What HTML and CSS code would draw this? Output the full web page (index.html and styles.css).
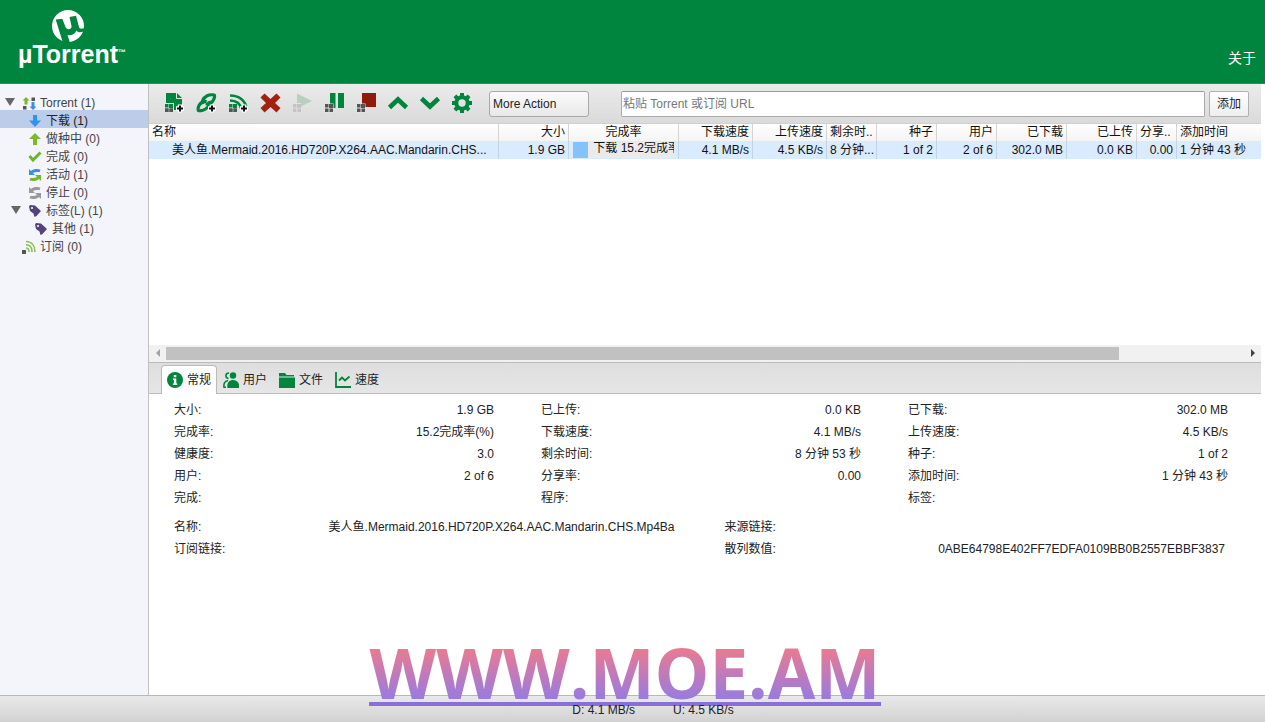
FILE: index.html
```html
<!DOCTYPE html>
<html lang="zh-CN">
<head>
<meta charset="utf-8">
<title>µTorrent</title>
<link rel="stylesheet" href="styles.css">
</head>
<body>
<svg class="defs" width="0" height="0" aria-hidden="true">
  <symbol id="dots" viewBox="0 0 24 24">
    <path d="M7 13h4v4H7zM3 17.500h3.500V21H3zM7.500 17.500H11V21H7.500zM3 13h3.500v3.500H3z"/>
  </symbol>
  <symbol id="plus" viewBox="0 0 24 24">
    <path d="M18 13.500v8M14 17.500h8" stroke="#fff" stroke-width="4.500" fill="none"/>
    <path d="M18 14.500v6M15 17.500h6" stroke="#111" stroke-width="2" fill="none"/>
  </symbol>
  <symbol id="tag" viewBox="0 0 14 14">
    <path d="M1 2.500 2 1l5 .5 6 5.500-4.500 5L6.500 13 5.500 9.500 2 7z" fill="#54427c"/>
    <circle cx="4" cy="4" r="1.100" fill="#f4f5fb"/>
  </symbol>
  <symbol id="cycle" viewBox="0 0 14 14">
    <path class="c1" d="M1 1v6h6L5 5c2-1.200 4-1.200 6.500-.8L12.500 1.500C9 .6 5.500.8 3 3z"/>
    <path class="c2" d="M13 13V7H7l2 2c-2 1.200-4 1.200-6.500.8L1.500 12.500C5 13.400 8.500 13.200 11 11z"/>
  </symbol>
</svg>

<header class="header">
  <div class="logo">
    <svg class="logo-mark" width="32" height="32" viewBox="0 0 32 32" aria-hidden="true">
      <circle cx="16" cy="16" r="16" fill="#fff"/>
      <path d="M3.700 9.500 10.300 8.800 13.500 17C14.500 20 20 20 19.500 16L17.500 7 24 5.800 27 17C27.500 19 29.500 19 33 18V21C29 22.500 26 23 24.500 20.500 22.500 25 18 26 15.500 25L18 33H11z" fill="#00853f"/>
    </svg>
    <div class="logo-name">µTorrent<span class="tm">™</span></div>
  </div>
  <a class="about" href="#">关于</a>
</header>

<main class="main">
  <nav class="sidebar">
    <ul class="tree">
      <li><span class="caret"></span><svg class="ico" viewBox="0 0 14 14"><path d="M1 10h3.500v3.500H1zM9.500 1.500H13V5H9.500z" fill="#555"/><path d="M4 1 .5 4.500h2V8.500h3v-4h2z" fill="#7ab82f"/><path d="M11 14 7.500 10.500h2V6h3v4.500h2z" fill="#3c8fe0"/></svg>Torrent (1)</li>
      <li class="l1 selected"><svg class="ico" viewBox="0 0 14 14"><path d="M5 1h4v5.500h4L7 13 1 6.500h4z" fill="#2e93f5"/></svg>下载 (1)</li>
      <li class="l1"><svg class="ico" viewBox="0 0 14 14"><path d="M5 13h4V7h4L7 1 1 7h4z" fill="#7db832"/></svg>做种中 (0)</li>
      <li class="l1"><svg class="ico" viewBox="0 0 14 14"><path d="m1.500 6 3.500 4L12.500 2.500" stroke="#6fb42f" stroke-width="3" fill="none"/></svg>完成 (0)</li>
      <li class="l1"><svg class="ico active" viewBox="0 0 14 14"><use href="#cycle"/></svg>活动 (1)</li>
      <li class="l1"><svg class="ico stopped" viewBox="0 0 14 14"><use href="#cycle"/></svg>停止 (0)</li>
      <li class="l1"><span class="caret"></span><svg class="ico" viewBox="0 0 14 14"><use href="#tag"/></svg>标签(L) (1)</li>
      <li class="l2"><svg class="ico" viewBox="0 0 14 14"><use href="#tag"/></svg>其他 (1)</li>
      <li><svg class="ico" viewBox="0 0 14 14"><path d="M0 10h4v4H0z" fill="#555"/><path d="M4 8c1.500 0 3 1.200 3 4M4 4.800c4 0 6 3 6 7.200M4 1.500c5.500 0 9 4 9 10.500" stroke="#8cc152" stroke-width="1.600" fill="none"/></svg>订阅 (0)</li>
    </ul>
  </nav>

  <section class="content">
    <div class="toolbar">
      <button class="tool" aria-label="添加 Torrent"><svg viewBox="0 0 24 24"><path d="M4 2h11l5 5v12H12v-7H4z" fill="#00853f"/><path d="M14.500 2v5.500H20" stroke="#e6e6e6" fill="none"/><use href="#dots" fill="#00853f"/><path d="M3 17.500h3.500V21H3zM7.500 17.500H11V21H7.500z" fill="#555"/><use href="#plus"/></svg></button>
      <button class="tool" aria-label="添加链接"><svg viewBox="0 0 24 24"><g fill="none" stroke="#00853f" stroke-width="3.200"><path d="M9 13C7.500 9 10 6.500 13 4.800 16 3.500 20 3.500 20.500 4.200 21 5.500 20 9 18 11 16.500 12.500 14 13.500 12 12.500"/><path d="M15 10C16.500 14 14 16.500 11.500 18 8.500 19.800 5 20 4.300 19.500 3.500 18 4.500 14.500 6.500 12.500 8 11 10.500 10 12.500 11"/></g><use href="#plus"/></svg></button>
      <button class="tool" aria-label="添加订阅"><svg viewBox="0 0 24 24"><g fill="none" stroke="#00853f" stroke-width="2.600"><path d="M4 4.500c9 0 15.500 5 16.500 13M4 9.500c6.500 0 10.500 3.500 11.500 9"/></g><use href="#dots" fill="#00853f"/><path d="M3 17.500h3.500V21H3zM7.500 17.500H11V21H7.500z" fill="#555"/><use href="#plus"/></svg></button>
      <button class="tool" aria-label="删除"><svg viewBox="0 0 24 24"><path d="M6.500 2.500 12.500 8l6-5.500 4 4-5.500 5.500 5.500 5-4 4.500-6-5.500-6 5.500-4-4.500L8 12 2.500 6.500z" fill="#a4200f"/></svg></button>
      <button class="tool" aria-label="开始" disabled><svg viewBox="0 0 24 24"><path d="M7 2.500 22 10 7 17.500z" fill="#b9cfc1"/><path d="M3 12h8v9H3z" fill="#e3e3e3"/><use href="#dots" fill="#c4c4c4"/></svg></button>
      <button class="tool" aria-label="暂停"><svg viewBox="0 0 24 24"><path d="M8 2h5.500v15H8zM16 2h6v15h-6z" fill="#00853f"/><path d="M2 12.500h9.500V22H2z" fill="#e3e3e3"/><use href="#dots" fill="#555"/></svg></button>
      <button class="tool" aria-label="停止"><svg viewBox="0 0 24 24"><path d="M8 2h14v14H8z" fill="#901a0c"/><path d="M2 12.500h9.500V22H2z" fill="#e3e3e3"/><use href="#dots" fill="#555"/></svg></button>
      <button class="tool" aria-label="上移"><svg viewBox="0 0 24 24"><path d="m3.500 16.500 8.500-8 8.500 8" stroke="#00853f" stroke-width="4.600" fill="none"/></svg></button>
      <button class="tool" aria-label="下移"><svg viewBox="0 0 24 24"><path d="m3.500 7.500 8.500 8 8.500-8" stroke="#00853f" stroke-width="4.600" fill="none"/></svg></button>
      <button class="tool" aria-label="设置"><svg viewBox="0 0 24 24"><circle cx="12" cy="12" r="5.700" fill="none" stroke="#00853f" stroke-width="4"/><path d="M12 2v3M12 19v3M2 12h3M19 12h3M4.900 4.900 7 7M17 17l2.100 2.100M4.900 19.100 7 17M17 7l2.100-2.100" stroke="#00853f" stroke-width="4"/></svg></button>
      <select class="more" aria-label="More Action"><option>More Action</option></select>
      <input class="url" type="text" placeholder="粘贴 Torrent 或订阅 URL" aria-label="粘贴 Torrent 或订阅 URL">
      <button class="add">添加</button>
    </div>

    <div class="list">
      <table class="torrents">
        <colgroup><col class="w-name"><col class="w-70"><col class="w-110"><col class="w-74"><col class="w-74"><col class="w-50"><col class="w-60"><col class="w-60"><col class="w-70"><col class="w-70"><col class="w-40"><col class="w-84"></colgroup>
        <thead>
          <tr><th class="left">名称</th><th>大小</th><th class="center">完成率</th><th>下载速度</th><th>上传速度</th><th class="left">剩余时..</th><th>种子</th><th>用户</th><th>已下载</th><th>已上传</th><th class="left">分享..</th><th class="left">添加时间</th></tr>
        </thead>
        <tbody>
          <tr><td class="left name">美人鱼.Mermaid.2016.HD720P.X264.AAC.Mandarin.CHS...</td><td>1.9 GB</td><td class="left"><div class="progress"><div class="bar" style="width:15.2%"></div><span>下载 15.2完成率(%)</span></div></td><td>4.1 MB/s</td><td>4.5 KB/s</td><td class="left">8 分钟...</td><td>1 of 2</td><td>2 of 6</td><td>302.0 MB</td><td>0.0 KB</td><td>0.00</td><td class="left">1 分钟 43 秒</td></tr>
        </tbody>
      </table>
      <div class="scrollbar"><span class="arrow prev"></span><div class="track"><div class="thumb"></div></div><span class="arrow next"></span></div>
    </div>

    <div class="tabs">
      <button class="tab current"><svg viewBox="0 0 16 16"><circle cx="8" cy="8" r="8" fill="#00853f"/><path d="M6.800 3h2.500v2.200H6.800zM6 6.500h3.300v5h1V13H5.900v-1.500h1V8H6z" fill="#fff"/></svg>常规</button>
      <button class="tab"><svg viewBox="0 0 16 16"><g fill="#00853f"><circle cx="10" cy="3.500" r="3.200"/><path d="M4.500 16c-1-5 1.500-8 5.500-8s7 3 6 8z"/></g><path d="M6 1C2 1 2 6 5.500 6.500M5 8.500C1.500 9 .5 12 1 15.200H3" fill="none" stroke="#00853f" stroke-width="1.600"/></svg>用户</button>
      <button class="tab"><svg viewBox="0 0 16 16"><path d="M0 1h6l1.500 2H15v1.500H0zM0 5.500h16V16H0z" fill="#00853f"/></svg>文件</button>
      <button class="tab"><svg viewBox="0 0 16 16"><path d="M1 0v15h15M4 8.500l3-3 3 3L14.500 4.500" fill="none" stroke="#00853f" stroke-width="1.800"/></svg>速度</button>
    </div>

    <div class="details">
      <dl class="three">
        <div><dt>大小:</dt><dd>1.9 GB</dd></div><div><dt>已上传:</dt><dd>0.0 KB</dd></div><div><dt>已下载:</dt><dd>302.0 MB</dd></div>
        <div><dt>完成率:</dt><dd>15.2完成率(%)</dd></div><div><dt>下载速度:</dt><dd>4.1 MB/s</dd></div><div><dt>上传速度:</dt><dd>4.5 KB/s</dd></div>
        <div><dt>健康度:</dt><dd>3.0</dd></div><div><dt>剩余时间:</dt><dd>8 分钟 53 秒</dd></div><div><dt>种子:</dt><dd>1 of 2</dd></div>
        <div><dt>用户:</dt><dd>2 of 6</dd></div><div><dt>分享率:</dt><dd>0.00</dd></div><div><dt>添加时间:</dt><dd>1 分钟 43 秒</dd></div>
        <div><dt>完成:</dt><dd></dd></div><div><dt>程序:</dt><dd></dd></div><div><dt>标签:</dt><dd></dd></div>
      </dl>
      <dl class="two">
        <div><dt>名称:</dt><dd>美人鱼.Mermaid.2016.HD720P.X264.AAC.Mandarin.CHS.Mp4Ba</dd></div><div><dt>来源链接:</dt><dd></dd></div>
        <div><dt>订阅链接:</dt><dd></dd></div><div><dt>散列数值:</dt><dd>0ABE64798E402FF7EDFA0109BB0B2557EBBF3837</dd></div>
      </dl>
    </div>
  </section>
</main>

<footer class="status"><div class="speeds"><span>D: 4.1 MB/s</span><span>U: 4.5 KB/s</span></div></footer>
<div class="watermark"><span>WWW.MOE.AM</span></div>
</body>
</html>
```
FILE: styles.css
```css
* { box-sizing: border-box; }
body {
  margin: 0;
  height: 100vh;
  display: flex;
  flex-direction: column;
  position: relative;
  overflow: hidden;
  background: #fff;
  color: #222;
  font: 12px/18px "Liberation Sans", "Noto Sans CJK SC", sans-serif;
}
button, input, select { font: inherit; color: inherit; margin: 0; }
.defs { position: absolute; }

.header {
  display: flex;
  justify-content: space-between;
  align-items: flex-end;
  padding: 10px 9px 13px 18px;
  height: 84px;
  background: #00853f;
  border-bottom: 1px solid #4f7a5f;
  color: #fff;
}
.logo { align-self: flex-start; }
.logo-mark { display: block; margin-left: 34px; }
.logo-name {
  font-size: 25px;
  font-weight: bold;
  line-height: 24px;
  white-space: nowrap;
}
.tm { font-size: 8px; vertical-align: 8px; line-height: 1; }
.about { color: #fff; font-size: 14px; line-height: 24px; text-decoration: none; }

.main { flex: 1; display: flex; min-height: 0; }
.sidebar {
  width: 149px;
  flex: none;
  padding-top: 8px;
  background: #f4f5fb;
  border-right: 1px solid #c0c0c0;
}
.tree { list-style: none; margin: 0; padding: 0; }
.tree li {
  display: flex;
  align-items: center;
  height: 18px;
  padding: 4px 0 0 22px;
  gap: 4px;
  position: relative;
  white-space: nowrap;
  color: #444;
}
.tree .l1 { padding-left: 28px; }
.tree .l2 { padding-left: 34px; }
.tree .selected { background: #bbcde9; color: #222; }
.ico { width: 14px; height: 14px; flex: none; }
.active { --c1: #3c8fe0; --c2: #74b82f; }
.stopped { --c1: #999; --c2: #999; }
.c1 { fill: var(--c1); }
.c2 { fill: var(--c2); }
.caret {
  position: absolute;
  left: 5px;
  top: 6px;
  border: 5px solid transparent;
  border-top: 8px solid #666;
  border-bottom: 0;
}
.l1 .caret { left: 11px; }

.content {
  flex: 1;
  min-width: 0;
  margin-right: 4px;
  display: flex;
  flex-direction: column;
}
.toolbar {
  display: flex;
  align-items: center;
  height: 40px;
  padding: 0 12px 0 9px;
  background: linear-gradient(#ebebeb, #dadada);
  border-bottom: 1px solid #d0d0d0;
}
.tool {
  width: 32px;
  height: 26px;
  flex: none;
  padding: 0 0 2px;
  border: 0;
  background: none;
  display: flex;
  align-items: center;
  justify-content: center;
}
.tool svg { width: 24px; height: 24px; }
.more {
  appearance: none;
  width: 100px;
  height: 26px;
  margin: 0 32px 0 11px;
  padding: 0 3px;
  border: 1px solid #a9a9a9;
  border-radius: 3px;
  background: linear-gradient(#fbfbfb, #e8e8e8);
}
.url {
  flex: 1;
  min-width: 0;
  height: 26px;
  padding: 0 1px;
  border: 1px solid #aaa;
  border-top-color: #999;
  border-radius: 2px;
  background: #fff;
}
.url::placeholder { color: #777; }
.add {
  width: 40px;
  height: 26px;
  margin-left: 4px;
  padding: 0;
  border: 1px solid #b0b0b0;
  border-radius: 2px;
  background: linear-gradient(#fff, #eee);
}

.list { flex: 239 1 0; display: flex; flex-direction: column; justify-content: space-between; }
.torrents {
  width: 100%;
  table-layout: fixed;
  border-collapse: separate;
  border-spacing: 0;
  color: #111;
}
.w-name { width: auto; }
.w-40 { width: 40px; }
.w-50 { width: 50px; }
.w-60 { width: 60px; }
.w-70 { width: 70px; }
.w-74 { width: 74px; }
.w-84 { width: 84px; }
.w-110 { width: 110px; }
.torrents th, .torrents td {
  height: 17px;
  padding: 0 3px;
  line-height: 17px;
  font-weight: normal;
  text-align: right;
  white-space: nowrap;
  overflow: hidden;
  border-right: 1px solid #d5d5d5;
}
.torrents td { height: 18px; line-height: 18px; border-color: #c3d3e4; }
.torrents th:last-child, .torrents td:last-child { border-right: 0; }
.torrents th { background: linear-gradient(#fff, #f4f4f4); }
.torrents tbody tr { background: #d9ebff; }
.torrents .left { text-align: left; }
.torrents .center { text-align: center; }
.torrents .name { padding-left: 23px; text-overflow: ellipsis; }
.progress {
  display: flex;
  height: 16px;
  margin: 0 1px;
  overflow: hidden;
  background: #eaeaea;
  line-height: 13px;
}
.bar { flex: none; background: #85c1fb; }
.progress span { padding-left: 5px; }

.scrollbar { display: flex; height: 18px; border-bottom: 1px solid #bbb; background: #f1f1f1; }
.arrow { width: 17px; display: flex; align-items: center; justify-content: center; }
.arrow::before { content: ""; border: 4px solid transparent; }
.prev::before { border-right-color: #a3a3a3; border-left: 0; }
.next::before { border-left-color: #444; border-right: 0; }
.track { flex: 1; padding: 2px 0; }
.thumb { width: 88.4%; height: 13px; background: #c1c1c1; }

.tabs {
  display: flex;
  height: 31px;
  flex: none;
  padding: 2px 12px 0;
  background: linear-gradient(#dedede, #e6e6e6);
  box-shadow: inset 0 -1px #bbb;
}
.tab {
  display: flex;
  align-items: center;
  justify-content: center;
  gap: 4px;
  width: 56px;
  padding: 0;
  border: 1px solid transparent;
  border-bottom: 0;
  background: none;
}
.tab svg { width: 16px; height: 16px; flex: none; }
.current { background: #fff; border-color: #bbb; border-radius: 4px 4px 0 0; }

.details { flex: 302 1 0; }
.details dl { display: grid; margin: 0; line-height: 22px; }
.details .three { grid-template-columns: repeat(3, 1fr); column-gap: 47px; padding: 5px 33px 0 25px; }
.details .two { grid-template-columns: repeat(2, 1fr); column-gap: 50px; padding: 7px 36px 0 25px; }
.details dl div { display: flex; justify-content: space-between; height: 22px; }
.details dd { margin: 0; }

.status {
  height: 27px;
  padding-top: 5px;
  border-top: 1px solid #b8b8b8;
  background: linear-gradient(#e9e9e9, #d2d2d2);
}
.speeds {
  position: relative;
  z-index: 2;
  display: flex;
  justify-content: center;
  gap: 38px;
  margin-right: -41px;
}
.watermark {
  position: absolute;
  z-index: 1;
  left: 369px;
  bottom: 16px;
  width: 512px;
  border-bottom: 4px solid #8a70d6;
  font: bold 69px/60px "Open Sans", "Noto Sans", sans-serif;
  text-align: center;
  white-space: nowrap;
}
.watermark span {
  display: block;
  background: linear-gradient(#e97a92 12%, #9d7bdc 90%);
  background-clip: text;
  -webkit-background-clip: text;
  color: transparent;
}
```
